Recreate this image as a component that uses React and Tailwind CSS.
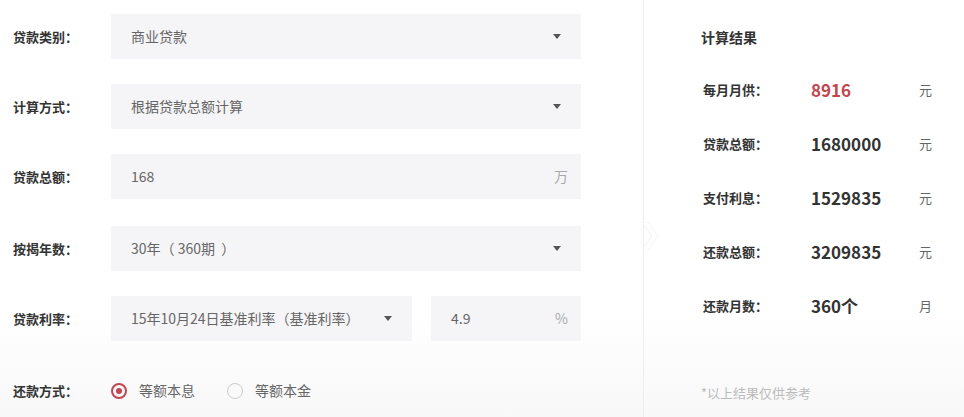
import React from 'react';

const font = "font-['Noto_Sans_CJK_SC','Noto_Sans',sans-serif]";

const Caret = () => (
    <span className="w-0 h-0 border-x-[4px] border-x-transparent border-t-[5px] border-t-[#555]" />
);

const SelectBox = ({ value, className = '' }) => (
    <div className={`h-[45px] bg-[#f5f5f7] flex items-center justify-between pl-5 pr-5 ${className}`}>
        <span className="text-[14px] text-[#666] whitespace-pre">{value}</span>
        <Caret />
    </div>
);

const InputBox = ({ value, unit, className = '' }) => (
    <div className={`h-[45px] bg-[#f5f5f7] flex items-center justify-between pl-5 pr-[13px] ${className}`}>
        <span className="text-[14px] text-[#666]">{value}</span>
        <span className="text-[14px] text-[#aaa]">{unit}</span>
    </div>
);

const FormRow = ({ label, children, className = '' }) => (
    <div className={`flex items-center ${className}`}>
        <div className="w-[98px] text-[13px] font-bold text-[#333]">{label}</div>
        {children}
    </div>
);

const results = [
    { label: '每月月供：', value: '8916', unit: '元', red: true },
    { label: '贷款总额：', value: '1680000', unit: '元' },
    { label: '支付利息：', value: '1529835', unit: '元' },
    { label: '还款总额：', value: '3209835', unit: '元' },
    { label: '还款月数：', value: '360个', unit: '月' },
];

const App = () => {
    return (
        <div className={`${font} w-[964px] h-[417px] flex bg-linear-to-b from-white from-75% to-[#f8f8f8] overflow-hidden`}>
            {/* Left form */}
            <div className="w-[643px] pl-[13px] pt-[14px] flex flex-col">
                <div className="flex flex-col gap-[25px] w-[568px]">
                    <FormRow label="贷款类别：">
                        <SelectBox value="商业贷款" className="flex-1" />
                    </FormRow>
                    <FormRow label="计算方式：">
                        <SelectBox value="根据贷款总额计算" className="flex-1" />
                    </FormRow>
                    <FormRow label="贷款总额：">
                        <InputBox value="168" unit="万" className="flex-1" />
                    </FormRow>
                    <FormRow label="按揭年数：" className="mt-[2px]">
                        <SelectBox value="30年（ 360期  ）" className="flex-1" />
                    </FormRow>
                    <FormRow label="贷款利率：">
                        <div className="flex-1 flex gap-[19px]">
                            <SelectBox value="15年10月24日基准利率（基准利率）" className="w-[301px]" />
                            <InputBox value="4.9" unit="%" className="flex-1" />
                        </div>
                    </FormRow>
                </div>
                <div className="flex items-center mt-[39px]">
                    <div className="w-[98px] text-[13px] font-bold text-[#333]">还款方式：</div>
                    <div className="flex items-center">
                        <span className="w-4 h-4 rounded-full border-2 border-[#c2454f] flex items-center justify-center">
                            <span className="w-[6px] h-[6px] rounded-full bg-[#c2454f]" />
                        </span>
                        <span className="ml-[12px] text-[14px] text-[#666]">等额本息</span>
                        <span className="ml-[32px] w-4 h-4 rounded-full border-[1.5px] border-[#ccc]" />
                        <span className="ml-[12px] text-[14px] text-[#666]">等额本金</span>
                    </div>
                </div>
            </div>

            {/* Right results */}
            <div className="relative flex-1 border-l border-[#eeeeee] pl-[57px] pt-[26px] flex flex-col">
                <svg className="absolute left-[-2px] top-[222px]" width="18" height="28" viewBox="0 0 18 28">
                    <polygon points="0,0 6,0 16,14 6,28 0,28 10,14" fill="#ffffff" stroke="#f4f4f4" strokeWidth="1" />
                </svg>
                <div className="text-[14px] font-bold text-[#333] leading-[22px]">计算结果</div>
                <div className="flex flex-col gap-[32px] mt-[31px]">
                    {results.map((r) => (
                        <div key={r.label} className="flex items-center h-[22px]">
                            <div className="w-[110px] pl-[2px] text-[13px] font-bold text-[#333]">{r.label}</div>
                            <div className={`w-[108px] text-[17px] font-bold ${r.red ? 'text-[#c2454f]' : 'text-[#333]'}`}>{r.value}</div>
                            <div className="text-[13px] text-[#666]">{r.unit}</div>
                        </div>
                    ))}
                </div>
                <div className="mt-auto mb-[15px] text-[13px] text-[#bbb]">*以上结果仅供参考</div>
            </div>
        </div>
    );
};

export default App;
